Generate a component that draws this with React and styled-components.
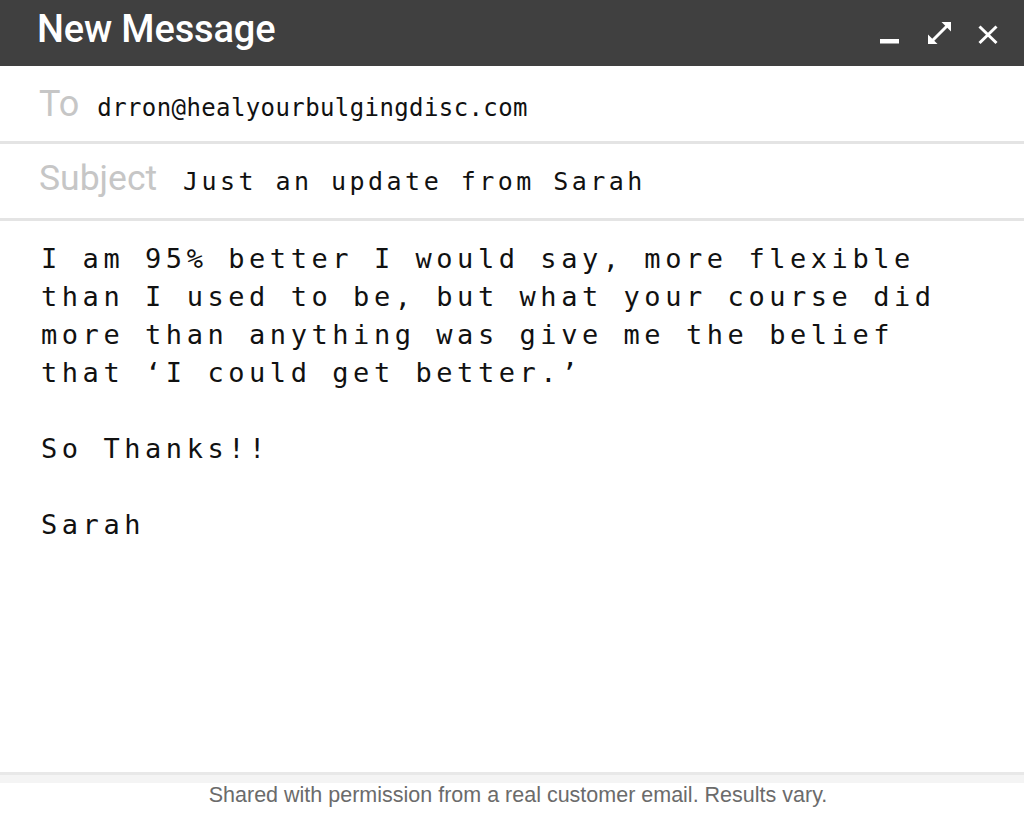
import React from "react";
import styled, { createGlobalStyle } from "styled-components";

const Global = createGlobalStyle`
  html, body { margin: 0; padding: 0; background: #ffffff; }
  body { width: 1024px; height: 817px; overflow: hidden; }
  * { box-sizing: border-box; }
`;

const Page = styled.div`
  width: 1024px;
  height: 817px;
  display: flex;
  flex-direction: column;
  background: #ffffff;
`;

const Header = styled.header`
  height: 66px;
  flex: none;
  background: #404040;
  display: flex;
  align-items: center;
  justify-content: space-between;
  padding: 0 24px 8px 37px;
`;

const Title = styled.h1`
  margin: 0;
  font-family: Roboto, "Liberation Sans", sans-serif;
  font-weight: 500;
  font-size: 38px;
  line-height: 1;
  letter-spacing: -0.15px;
  color: #ffffff;
`;

const Controls = styled.div`
  display: flex;
  align-items: flex-start;
  gap: 24px;
  padding-top: 8px;
`;

const IconButton = styled.button`
  width: 24px;
  height: 24px;
  padding: 0;
  border: 0;
  background: transparent;
  display: block;
  cursor: pointer;
  svg { display: block; }
`;

const FieldRow = styled.div`
  height: ${(p) => p.$height}px;
  flex: none;
  display: flex;
  align-items: baseline;
  gap: ${(p) => p.$gap}px;
  padding: ${(p) => p.$top}px 0 0 39px;
  border-bottom: 3px solid #e4e4e4;
`;

const FieldLabel = styled.span`
  font-family: Roboto, "Liberation Sans", sans-serif;
  font-weight: 400;
  font-size: ${(p) => p.$size}px;
  line-height: 1;
  color: #c6c6c6;
`;

const FieldValue = styled.span`
  font-family: "DejaVu Sans Mono", "Liberation Mono", monospace;
  font-size: ${(p) => p.$size}px;
  letter-spacing: ${(p) => p.$spacing}px;
  line-height: 1;
  color: #111111;
`;

const Body = styled.div`
  flex: 1;
  padding: 19px 0 0 41px;
  font-family: "DejaVu Sans Mono", "Liberation Mono", monospace;
  font-size: 27px;
  line-height: 38px;
  letter-spacing: 4.55px;
  color: #111111;
`;

const Paragraph = styled.p`
  margin: 0 0 38px 0;
  white-space: pre;
`;

const Footer = styled.footer`
  flex: none;
  height: 45px;
  border-top: 3px solid #e8e8e8;
  background: linear-gradient(#f4f4f4 0, #f4f4f4 8px, #ffffff 8px);
  padding: 8px 0 0 12px;
  text-align: center;
  font-family: "Liberation Sans", Arial, sans-serif;
  font-size: 21.5px;
  line-height: 24px;
  color: #6b6b6b;
`;

const MinimizeIcon = () => (
  <svg width="24" height="24" viewBox="0 0 24 24">
    <rect x="-2" y="18" width="21" height="4.5" fill="#ffffff" />
  </svg>
);

const ExpandIcon = () => (
  <svg width="24" height="24" viewBox="0 0 24 24">
    <line x1="3" y1="21" x2="20" y2="4" stroke="#ffffff" strokeWidth="3" />
    <polygon points="13.5,1 23,1 23,10.5" fill="#ffffff" />
    <polygon points="0,13.5 0,23 9.5,23" fill="#ffffff" />
  </svg>
);

const CloseIcon = () => (
  <svg width="24" height="24" viewBox="0 0 24 24">
    <path d="M3.5 5.5 L20.5 22 M20.5 5.5 L3.5 22" stroke="#ffffff" strokeWidth="3" fill="none" />
  </svg>
);

const paragraphs = [
  "I am 95% better I would say, more flexible\nthan I used to be, but what your course did\nmore than anything was give me the belief\nthat \u2018I could get better.\u2019",
  "So Thanks!!",
  "Sarah",
];

export default function App() {
  return (
    <>
      <Global />
      <Page>
        <Header>
          <Title>New Message</Title>
          <Controls>
            <IconButton aria-label="Minimize"><MinimizeIcon /></IconButton>
            <IconButton aria-label="Expand"><ExpandIcon /></IconButton>
            <IconButton aria-label="Close"><CloseIcon /></IconButton>
          </Controls>
        </Header>
        <FieldRow $height={78} $top={20} $gap={18}>
          <FieldLabel $size={36}>To</FieldLabel>
          <FieldValue $size={24} $spacing={0.4}>drron@healyourbulgingdisc.com</FieldValue>
        </FieldRow>
        <FieldRow $height={77} $top={17} $gap={26}>
          <FieldLabel $size={35.5}>Subject</FieldLabel>
          <FieldValue $size={25} $spacing={3.45}>Just an update from Sarah</FieldValue>
        </FieldRow>
        <Body>
          {paragraphs.map((t, i) => (
            <Paragraph key={i}>{t}</Paragraph>
          ))}
        </Body>
        <Footer>Shared with permission from a real customer email. Results vary.</Footer>
      </Page>
    </>
  );
}
